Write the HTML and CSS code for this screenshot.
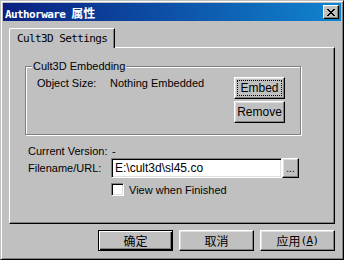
FILE: index.html
```html
<!DOCTYPE html>
<html lang="zh">
<head>
    <meta charset="UTF-8">
    <title>Authorware 属性</title>
    <link rel="stylesheet" href="styles.css">
</head>
<body>

<div class="window">
    <div class="titlebar">
        <span class="title">Authorware <span class="cjk">属性</span></span>
        <span class="close">
            <svg width="8" height="7" viewBox="0 0 8 7" shape-rendering="crispEdges">
                <path fill="#000" d="M0 0h2v1H0zM6 0h2v1H6zM1 1h2v1H1zM5 1h2v1H5zM2 2h4v1H2zM3 3h2v1H3zM2 4h4v1H2zM1 5h2v1H1zM5 5h2v1H5zM0 6h2v1H0zM6 6h2v1H6z"/>
            </svg>
        </span>
    </div>

    <div class="client">
        <!-- onglets -->
        <div class="tabs">
            <div class="tab">Cult3D Settings</div>
        </div>

        <div class="panel">
            <fieldset class="group">
                <legend>Cult3D Embedding</legend>
                <div class="group-body">
                    <div class="info">
                        <span class="label-short">Object Size:</span>
                        <span>Nothing Embedded</span>
                    </div>
                    <div class="side-buttons">
                        <button class="btn side focus"><span>Embed</span></button>
                        <button class="btn side">Remove</button>
                    </div>
                </div>
            </fieldset>

            <div class="fields">
                <div class="row version">
                    <span class="label">Current Version:</span>
                    <span class="value">-</span>
                </div>
                <div class="row">
                    <span class="label">Filename/URL:</span>
                    <div class="input">E:\cult3d\sl45.co</div>
                    <button class="btn browse">...</button>
                </div>
                <div class="row check">
                    <span class="box"></span>
                    <span>View when Finished</span>
                </div>
            </div>
        </div>

        <!-- boutons du bas -->
        <div class="actions">
            <button class="btn big default">确定</button>
            <button class="btn big">取消</button>
            <button class="btn big">应用<span class="mono">(<u>A</u>)</span></button>
        </div>
    </div>
</div>

</body>
</html>
```

FILE: styles.css
```css
body {
    margin: 0;
    background: #c0c0c0;
    font-family: "Liberation Sans", Arial, sans-serif;
    font-size: 11px;
    color: #000;
}

.window {
    width: 344px;
    height: 260px;
    box-sizing: border-box;
    background: #c0c0c0;
    border: 1px solid;
    border-color: #c0c0c0 #000 #000 #c0c0c0;
    box-shadow: inset 1px 1px #fff, inset -1px -1px #808080;
    padding: 2px;
}

/* Barre de titre */
.titlebar {
    height: 18px;
    display: flex;
    align-items: center;
    justify-content: space-between;
    padding: 0 2px;
    background: linear-gradient(to right, #0a2080, #1084d0);
}

.title {
    color: #fff;
    font-family: "DejaVu Sans Mono", "Liberation Mono", monospace;
    font-weight: bold;
    font-size: 11px;
    letter-spacing: -0.6px;
    white-space: pre;
}

.cjk {
    font-family: "Noto Sans CJK SC", sans-serif;
    font-size: 12px;
    letter-spacing: 0;
}

.close {
    width: 16px;
    height: 14px;
    box-sizing: border-box;
    display: flex;
    align-items: center;
    justify-content: center;
    background: #c0c0c0;
    border: 1px solid;
    border-color: #fff #000 #000 #fff;
    box-shadow: inset -1px -1px #808080;
}

.client {
    padding: 7px 6px 0 6px;
}

/* Onglets */
.tabs {
    display: flex;
}

.tab {
    position: relative;
    z-index: 1;
    width: 106px;
    height: 20px;
    box-sizing: border-box;
    margin-bottom: -1px;
    padding: 3px 0 0 7px;
    background: #c0c0c0;
    border-top: 1px solid #fff;
    border-left: 1px solid #fff;
    border-right: 1px solid #000;
    border-top-left-radius: 2px;
    box-shadow: inset -1px 0 #808080;
    font-family: "DejaVu Sans Mono", "Liberation Mono", monospace;
    font-size: 11px;
    letter-spacing: -0.6px;
    line-height: 13px;
}

.panel {
    height: 177px;
    box-sizing: border-box;
    border: 1px solid;
    border-color: #fff #000 #000 #fff;
    box-shadow: inset -1px -1px #808080;
    padding: 12px 0 0 15px;
}

/* Groupe Cult3D Embedding */
.group {
    width: 276px;
    box-sizing: border-box;
    margin: 0;
    padding: 0;
    min-width: 0;
    border: 1px solid #808080;
    box-shadow: inset 1px 1px #fff, 1px 1px #fff;
}

.group legend {
    margin-left: 6px;
    padding: 0 1px;
    line-height: 13px;
    background: #c0c0c0;
}

.group-body {
    display: flex;
    justify-content: space-between;
    align-items: flex-start;
    padding: 4px 15px 11px 11px;
}

.info {
    display: flex;
    line-height: 13px;
}

.label-short {
    flex: none;
    width: 73px;
}

.side-buttons {
    display: flex;
    flex-direction: column;
    gap: 2px;
}

/* Boutons */
.btn {
    font-family: "Liberation Sans", Arial, sans-serif;
    font-size: 11px;
    color: #000;
    background: #c0c0c0;
    border: 1px solid;
    border-color: #fff #000 #000 #fff;
    box-shadow: inset -1px -1px #808080, inset 1px 1px #dfdfdf;
    padding: 0;
    margin: 0;
    box-sizing: border-box;
    display: flex;
    align-items: center;
    justify-content: center;
}

.side {
    width: 51px;
    height: 22px;
    font-size: 12px;
}

.focus span {
    display: flex;
    align-items: center;
    justify-content: center;
    width: 43px;
    height: 14px;
    border: 1px dotted #000;
}

.fields {
    margin: 9px 0 0 3px;
}

.row {
    display: flex;
    align-items: center;
    height: 20px;
}

.row.version {
    height: 14px;
}

.label {
    flex: none;
    width: 83px;
}

.value {
    padding-left: 1px;
}

.input {
    width: 171px;
    height: 20px;
    box-sizing: border-box;
    background: #fff;
    border: 1px solid;
    border-color: #808080 #fff #fff #808080;
    box-shadow: inset 1px 1px #000, inset -1px -1px #dfdfdf;
    padding: 0 0 0 3px;
    display: flex;
    align-items: center;
    font-size: 12px;
}

.browse {
    width: 17px;
    height: 20px;
    margin-left: 0;
    font-size: 10px;
}

.check {
    height: 13px;
    margin-top: 5px;
    padding-left: 83px;
}

.box {
    width: 13px;
    height: 13px;
    box-sizing: border-box;
    background: #fff;
    border: 1px solid;
    border-color: #808080 #fff #fff #808080;
    box-shadow: inset 1px 1px #000, inset -1px -1px #dfdfdf;
    margin-right: 5px;
}

.actions {
    display: flex;
    justify-content: flex-end;
    gap: 6px;
    margin-top: 6px;
}

.big {
    width: 75px;
    height: 21px;
    font-family: "Noto Sans CJK SC", sans-serif;
    font-size: 12px;
}

.default {
    border: 1px solid #000;
    box-shadow: inset 1px 1px #fff, inset -1px -1px #000, inset -2px -2px #808080;
}

.mono {
    font-family: "DejaVu Sans Mono", monospace;
    font-size: 11px;
    letter-spacing: -0.6px;
}
```
